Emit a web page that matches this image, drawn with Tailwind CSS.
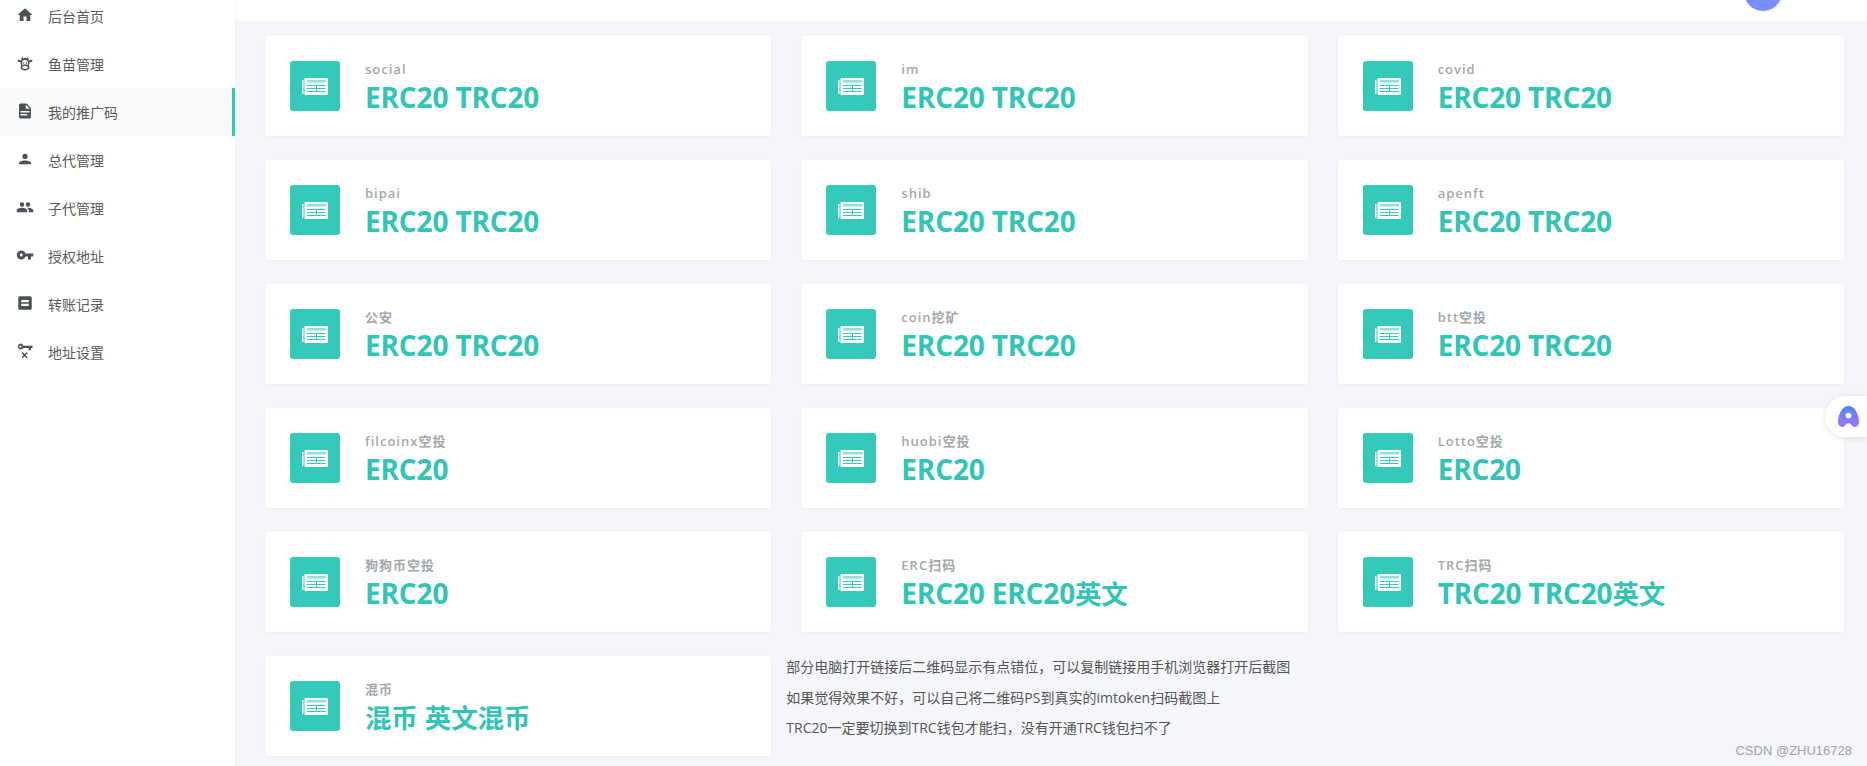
<!DOCTYPE html>
<html lang="zh-CN">
<head>
  <meta charset="UTF-8">
  <title>我的推广码</title>
  <script src="https://cdn.jsdelivr.net/npm/@tailwindcss/browser@4"></script>
</head>
<body class="bg-[#f4f6fa] text-[#555] font-['Open_Sans','Noto_Sans_CJK_SC',sans-serif] h-[766px] overflow-hidden">
  <div class="flex h-[766px] overflow-hidden">

    <!-- sidebar -->
    <aside class="w-[235px] shrink-0 bg-white shadow-[1px_0_3px_rgba(0,0,0,0.03)] z-10">
      <nav id="menu" class="-mt-2 text-[14px] text-[#5a5a5a]"></nav>
    </aside>

    <div class="flex-1 min-w-0">
      <!-- top bar -->
      <header class="h-[21px] bg-white overflow-hidden flex justify-end pr-[85px]">
        <div class="w-[38px] h-[38px] rounded-full bg-[#7b8cff] -mt-[27px]"></div>
      </header>

      <!-- cards -->
      <main id="grid" class="grid grid-cols-3 w-[1609px] gap-x-[30px] gap-y-[24px] pl-[30px] pt-[15px]"></main>
    </div>
  </div>

  <!-- floating widget -->
  <div class="absolute right-0 top-[396px] w-[42px] h-[41px] bg-white rounded-l-full shadow-[0_1px_6px_rgba(0,0,0,0.12)] pl-[12px] pt-[9px]">
    <svg class="w-[23px] h-[23px]" viewBox="0 0 24 24">
      <defs><linearGradient id="a" x1="0" y1="0" x2="0" y2="1"><stop offset="0" stop-color="#4c86f5"/><stop offset="1" stop-color="#a772f7"/></linearGradient></defs>
      <path fill="url(#a)" fill-rule="evenodd" d="M12 1C6 1 2 8 1 16c-.4 4 1.500 7 4.500 7 3 0 3.200-4 6.500-4s3.500 4 6.500 4c3 0 4.900-3 4.500-7C22 8 18 1 12 1zm0 7a3 3 0 1 1 0 6 3 3 0 0 1 0-6z"/>
    </svg>
  </div>

  <div class="absolute right-[15px] top-[743px] text-[13px] leading-4 text-[#a3a3a3] font-['Liberation_Sans',sans-serif]">CSDN @ZHU16728</div>

  <script>
    const icons = {
      home: '<path d="M10 20v-6h4v6h5v-8h3L12 3 2 12h3v8z"/>',
      cow: '<path d="M10.500 18a.5.5 0 1 1 0 1 .5.5 0 0 1 0-1m3 0a.5.5 0 1 1 0 1 .5.5 0 0 1 0-1M10 11a1 1 0 1 1 0 2 1 1 0 0 1 0-2m4 0a1 1 0 1 1 0 2 1 1 0 0 1 0-2m4 7c0 2.210-2.690 4-6 4s-6-1.790-6-4c0-.9.45-1.730 1.200-2.400C6.450 14.600 6 13.350 6 12l.12-1.220c-.54.15-1.190.15-1.720 0C3.380 10.500 1.840 9.350 2.070 8.550c.23-.8 2.140-.95 3.160-.65.59.17 1.220.6 1.590 1.060l.57-.81C6.790 7.050 7 4 10 3l-.09.09C9.700 3.360 8.660 4.720 8.730 6.060 9.610 5.420 10.760 5 12 5s2.390.42 3.270 1.060c.07-1.340-.97-2.700-1.180-2.970L14 3c3 1 3.210 4.050 2.610 5.150l.57.81c.37-.46 1-.89 1.590-1.060 1.020-.3 2.930-.15 3.160.65.23.8-1.310 1.950-2.330 2.230-.53.15-1.180.15-1.720 0L18 12c0 1.350-.45 2.600-1.200 3.600.75.67 1.200 1.500 1.200 2.400m-6-2c-2.210 0-4 .9-4 2s1.790 2 4 2 4-.9 4-2-1.790-2-4-2m0-2c1.120 0 2.170.21 3.070.56.58-.69.93-1.560.93-2.560a4 4 0 0 0-8 0c0 1 .35 1.870.93 2.560.9-.35 1.950-.56 3.070-.56z"/>',
      file: '<path d="M13 9h5.500L13 3.500V9M6 2h8l6 6v12a2 2 0 0 1-2 2H6c-1.110 0-2-.9-2-2V4c0-1.110.89-2 2-2m9 16v-2H6v2h9m3-4v-2H6v2h12z"/>',
      user: '<path d="M12 5a3.500 3.500 0 1 1 0 7 3.500 3.500 0 0 1 0-7m0 9c4.400 0 8 1.600 8 3.500V19H4v-1.500C4 15.600 7.600 14 12 14z"/>',
      group: '<path d="M8 5.500a3 3 0 1 1 0 6 3 3 0 0 1 0-6m8 0a3 3 0 1 1 0 6 3 3 0 0 1 0-6M8 13c3 0 7 1.300 7 3.500V19H1v-2.500C1 14.300 5 13 8 13m8 0c3 0 7 1.300 7 3.500V19h-6v-2.500c0-1.400-.7-2.600-2.300-3.300.4-.1.900-.2 1.300-.2z"/>',
      key: '<path d="M7 14c-1.100 0-2-.9-2-2s.9-2 2-2 2 .9 2 2-.9 2-2 2m5.600-4C11.800 7.700 9.600 6 7 6c-3.300 0-6 2.700-6 6s2.700 6 6 6c2.600 0 4.800-1.700 5.600-4H16v4h4v-4h3v-4H12.600z"/>',
      note: '<path d="M5 3h14a2 2 0 0 1 2 2v14a2 2 0 0 1-2 2H5a2 2 0 0 1-2-2V5a2 2 0 0 1 2-2m2 5v3h10V8H7m0 5v3h10v-3H7z"/>',
      keyx: '<path d="M6 2a4 4 0 0 1 3.900 3H22v3h-2v3h-3V8H9.900A4 4 0 1 1 6 2m0 2.500a1.500 1.500 0 1 0 0 3 1.500 1.500 0 0 0 0-3M8.700 13.300l2.800 2.800 2.800-2.800 1.400 1.400-2.800 2.800 2.800 2.800-1.400 1.400-2.800-2.800-2.800 2.800-1.400-1.400 2.800-2.800-2.800-2.800z"/>'
    };

    const menu = [
      ['home', '后台首页'], ['cow', '鱼苗管理'], ['file', '我的推广码', true], ['user', '总代管理'],
      ['group', '子代管理'], ['key', '授权地址'], ['note', '转账记录'], ['keyx', '地址设置']
    ];

    document.getElementById('menu').innerHTML = menu.map(([icon, label, active]) => `
      <a class="flex items-center h-[48px] pl-[16px] gap-[14px] ${active ? 'bg-[#fafafa] border-r-[3px] border-[#35c9b9]' : ''}">
        <svg class="w-[18px] h-[18px] fill-[#4d5259] -mt-[3px]" viewBox="0 0 24 24">${icons[icon]}</svg>
        <span>${label}</span>
      </a>`).join('');

    const both = 'ERC20 TRC20';
    const cards = [
      ['social', both], ['im', both], ['covid', both],
      ['bipai', both], ['shib', both], ['apenft', both],
      ['公安', both], ['coin挖矿', both], ['btt空投', both],
      ['filcoinx空投', 'ERC20'], ['huobi空投', 'ERC20'], ['Lotto空投', 'ERC20'],
      ['狗狗币空投', 'ERC20'], ['ERC扫码', 'ERC20 ERC20英文'], ['TRC扫码', 'TRC20 TRC20英文'],
      ['混币', '混币 英文混币']
    ];

    const paper = `<svg class="w-[26px] h-[17px]" viewBox="0 0 26 17">
      <rect x="2.500" y="0" width="23.500" height="17" rx="1" fill="#fff"/>
      <rect x="0" y="2" width="1.500" height="14" fill="#fff"/>
      <rect x="5" y="2" width="19" height="2.500" fill="#35c9b9" fill-opacity=".55"/>
      <path stroke="#35c9b9" stroke-width="1" fill="none" d="M5 7.500H23.500M5 10.500H23.500M5 13.500H23.500M14.500 7V14"/>
    </svg>`;

    // the CJK glyphs in the big figures run a bit smaller than the latin ones
    const bigText = v => v.replace(/[\u4e00-\u9fff]+/g, m => `<span class="text-[26.5px]">${m}</span>`);

    document.getElementById('grid').innerHTML = cards.map(([label, value]) => `
      <div class="h-[100px] bg-white rounded-[3px] shadow-[0_1px_3px_rgba(0,0,0,0.04)] flex items-center pl-[25px]">
        <div class="w-[50px] h-[50px] rounded-[3px] bg-[#35c9b9] flex items-center justify-center">${paper}</div>
        <div class="ml-[25px] pt-[2px]">
          <div class="text-[13px] leading-[18px] font-semibold tracking-[1px] text-[#a3a7ab]">${label}</div>
          <div class="mt-[2px] text-[28px] leading-[34px] font-bold tracking-[-0.15px] text-[#32c4b4]">${bigText(value)}</div>
        </div>
      </div>`).join('') + `
      <div class="-ml-[15px] -mt-[4px] text-[14px] leading-[30.5px] text-[#555]">
        <p>部分电脑打开链接后二维码显示有点错位，可以复制链接用手机浏览器打开后截图</p>
        <p>如果觉得效果不好，可以自己将二维码PS到真实的imtoken扫码截图上</p>
        <p>TRC20一定要切换到TRC钱包才能扫，没有开通TRC钱包扫不了</p>
      </div>`;
  </script>
</body>
</html>
